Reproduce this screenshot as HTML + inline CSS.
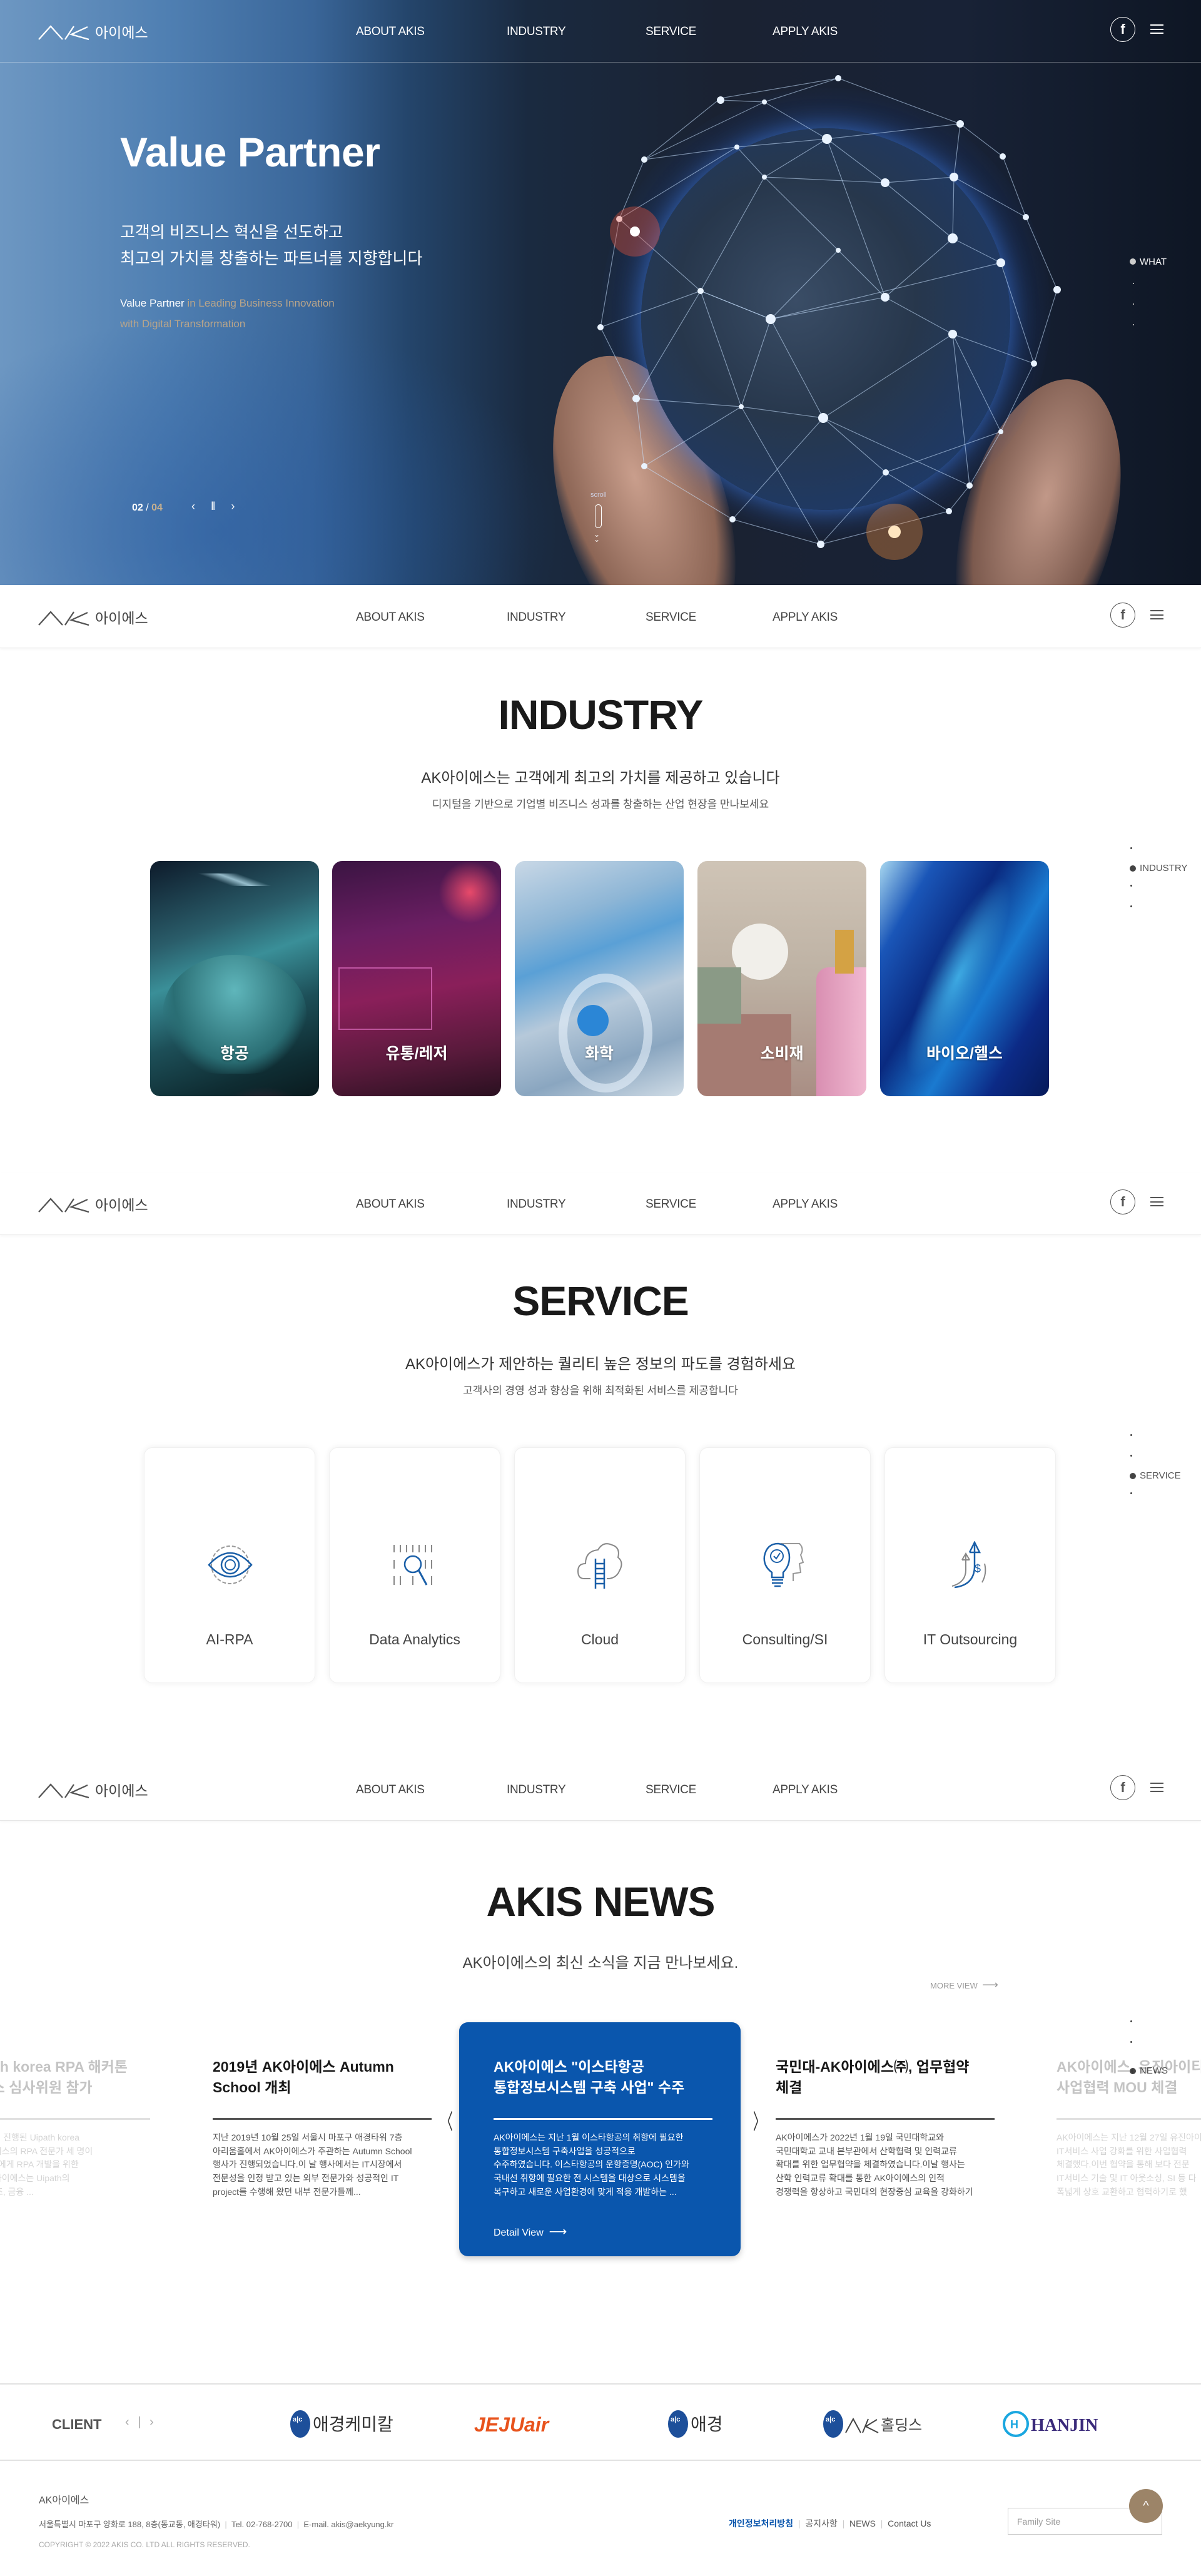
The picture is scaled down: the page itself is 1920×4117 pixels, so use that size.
<!DOCTYPE html>
<html><head><meta charset="utf-8">
<style>
*{margin:0;padding:0;box-sizing:border-box}
body{width:1920px;height:4117px;position:relative;background:#fff;font-family:"Liberation Sans","Noto Sans CJK KR",sans-serif;color:#222;overflow:hidden}
.abs{position:absolute}
.nav{position:absolute;left:0;width:1920px;height:100px}
.nav .logo{position:absolute;left:60px;top:18px}
.nav .m{position:absolute;top:40px;font-size:19px;letter-spacing:-0.3px}
.nav .fb{position:absolute;left:1775px;top:27px;width:40px;height:40px;border-radius:50%;border:1.5px solid;text-align:center;font-weight:bold;font-size:22px;line-height:38px}
.nav .hb{position:absolute;left:1839px;top:39px;width:21px;height:15px;border-top:2px solid;border-bottom:2px solid}
.nav .hb:after{content:"";position:absolute;left:0;right:0;top:4.5px;border-top:2px solid}
.light{background:#fff;border-bottom:1px solid #e6e6e6;box-shadow:0 2px 4px rgba(0,0,0,.04)}
.light,.light .m{color:#444}
.light .fb,.light .hb,.light .hb:after{border-color:#555;color:#555}
.dark{color:#fff;border-bottom:1px solid rgba(255,255,255,.35)}
.dark .fb,.dark .hb,.dark .hb:after{border-color:#fff}
.h2{position:absolute;left:0;width:1920px;text-align:center;font-weight:bold;color:#1a1a1a;letter-spacing:-1px}
.sub{position:absolute;left:0;width:1920px;text-align:center}
.side{position:absolute;left:1806px;font-size:15px;color:#555}
.side i{display:block;width:3px;height:3px;background:#444;border-radius:50%;margin:0 0 30px 1px}
.side b{display:inline-block;width:10px;height:10px;border-radius:50%;background:#444;margin-right:6px;vertical-align:-1px}
.ic{position:absolute;top:1376px;width:270px;height:376px;border-radius:16px;overflow:hidden}
.ic span{position:absolute;top:288px;left:0;width:100%;text-align:center;color:#fff;font-weight:bold;font-size:25px;text-shadow:0 1px 3px rgba(0,0,0,.4)}
.sc{position:absolute;top:2313px;width:274px;height:377px;border-radius:14px;background:#fff;box-shadow:0 0 10px rgba(0,0,0,.07);border:1px solid #f0f0f0}
.sc svg{position:absolute;left:99px;top:149px}
.sc span{position:absolute;top:293px;left:0;width:100%;text-align:center;font-size:23px;color:#444}
.nc{position:absolute;width:350px}
.nc h3{font-size:23px;line-height:33px;font-weight:bold;color:#1a1a1a;height:98px;white-space:nowrap}
.nc hr{border:0;border-top:3px solid #555}
.nc p{font-size:14px;line-height:21.7px;color:#555;margin-top:18px;white-space:nowrap}
</style></head><body>

<!-- HERO -->
<div class="abs" style="left:0;top:0;width:1920px;height:935px;overflow:hidden;background:linear-gradient(90deg,#6d97c2 0%,#4f7fb2 14%,#3a6699 26%,#24456b 34%,#1a2a40 44%,#1a2232 60%,#182236 80%,#0e1624 100%)">
 <div class="abs" style="left:-200px;top:500px;width:1100px;height:700px;background:radial-gradient(ellipse at center,rgba(40,90,160,.55),rgba(40,90,160,0) 70%)"></div>
 <div class="abs" style="left:900px;top:560px;width:260px;height:500px;border-radius:50%;background:radial-gradient(ellipse at 50% 40%,#c99e8c,#8d6656 60%,rgba(80,60,60,0) 75%);transform:rotate(-18deg)"></div>
 <div class="abs" style="left:1540px;top:600px;width:240px;height:480px;border-radius:50%;background:radial-gradient(ellipse at 50% 40%,#c19888,#7c5a4e 60%,rgba(80,60,60,0) 75%);transform:rotate(15deg)"></div>
 <div class="abs" style="left:960px;top:140px;width:720px;height:720px;border-radius:50%;background:radial-gradient(circle at 50% 50%,rgba(50,120,230,.45),rgba(30,80,180,.25) 55%,rgba(20,60,150,0) 72%)"></div>
 <div class="abs" style="left:1025px;top:205px;width:590px;height:610px;border-radius:50%;background:radial-gradient(circle at 42% 45%,#3a4d66 0%,#27374c 40%,#1d3a6a 80%,#3f7fd8 98%);box-shadow:0 0 40px rgba(70,140,255,.6)"></div>
 <svg class="abs" style="left:0;top:0" width="1920" height="935">
  <g stroke="rgba(200,225,255,.55)" stroke-width="1.2" fill="none">
   <polyline points="1340,125 1152,157 1152,160 1222,163 1340,125 1535,198 1603,250 1640,347 1690,463 1653,581 1600,690 1550,776 1517,817 1312,870 1171,830 1030,745 1017,637 960,523 990,350 1030,255 1152,157"/>
   <polyline points="1030,255 1222,163 1322,222 1535,198 1525,283 1415,292 1322,222 1178,235 1030,255"/>
   <polyline points="1178,235 1222,283 1415,292 1523,381 1600,420 1653,581 1523,534 1415,475 1232,510 1120,465 990,350 1178,235"/>
   <polyline points="960,523 1120,465 1222,283 1322,222 1415,475 1523,381 1525,283 1640,347"/>
   <polyline points="1017,637 1120,465 1232,510 1316,668 1523,534 1600,690 1416,755 1316,668 1185,650 1017,637"/>
   <polyline points="1030,745 1185,650 1312,870 1416,755 1517,817"/>
   <polyline points="1171,830 1316,668 1550,776 1523,534"/>
   <polyline points="1232,510 1340,400 1415,475 1340,400 1222,283"/>
   <polyline points="1120,465 1185,650 1232,510 1600,420"/>
  </g>
  <g fill="#e9f3ff">
   <circle cx="1340" cy="125" r="5"/><circle cx="1152" cy="160" r="6"/><circle cx="1222" cy="163" r="4"/><circle cx="1535" cy="198" r="6"/><circle cx="1603" cy="250" r="5"/><circle cx="1640" cy="347" r="5"/><circle cx="1690" cy="463" r="6"/><circle cx="1653" cy="581" r="5"/><circle cx="1600" cy="690" r="4"/><circle cx="1550" cy="776" r="5"/><circle cx="1517" cy="817" r="5"/><circle cx="1312" cy="870" r="6"/><circle cx="1171" cy="830" r="5"/><circle cx="1030" cy="745" r="5"/><circle cx="1017" cy="637" r="6"/><circle cx="960" cy="523" r="5"/><circle cx="990" cy="350" r="5"/><circle cx="1030" cy="255" r="5"/><circle cx="1322" cy="222" r="8"/><circle cx="1415" cy="292" r="7"/><circle cx="1525" cy="283" r="7"/><circle cx="1178" cy="235" r="4"/><circle cx="1523" cy="381" r="8"/><circle cx="1415" cy="475" r="7"/><circle cx="1232" cy="510" r="8"/><circle cx="1120" cy="465" r="5"/><circle cx="1523" cy="534" r="7"/><circle cx="1316" cy="668" r="8"/><circle cx="1416" cy="755" r="5"/><circle cx="1185" cy="650" r="4"/><circle cx="1340" cy="400" r="4"/><circle cx="1600" cy="420" r="7"/><circle cx="1222" cy="283" r="4"/>
  </g>
  <circle cx="1015" cy="370" r="40" fill="rgba(255,90,60,.35)"/><circle cx="1015" cy="370" r="8" fill="#fff"/>
  <circle cx="1430" cy="850" r="45" fill="rgba(255,150,60,.35)"/><circle cx="1430" cy="850" r="10" fill="#ffe6c0"/>
 </svg>
 <div class="abs" style="left:192px;top:205px;font-size:66px;font-weight:bold;color:#fff;letter-spacing:-0.5px">Value Partner</div>
 <div class="abs" style="left:192px;top:350px;font-size:26px;line-height:42px;color:#fff">고객의 비즈니스 혁신을 선도하고<br>최고의 가치를 창출하는 파트너를 지향합니다</div>
 <div class="abs" style="left:192px;top:468px;font-size:17px;line-height:33px;color:#fff">Value Partner <span style="color:#b9a58a">in Leading Business Innovation<br>with Digital Transformation</span></div>
 <div class="abs" style="left:211px;top:803px;font-size:16px;color:#fff;font-weight:bold">02 <span style="font-weight:normal">/</span> <span style="color:#c7b08f">04</span></div>
 <div class="abs" style="left:306px;top:799px;font-size:18px;color:#fff;letter-spacing:10px">‹ ‖ ›</div>
 <div class="abs" style="left:944px;top:785px;font-size:11px;color:#ccd">scroll</div>
 <div class="abs" style="left:951px;top:806px;width:11px;height:38px;border:1.5px solid #fff;border-radius:6px"></div>
 <div class="abs" style="left:949px;top:850px;font-size:12px;color:#fff;line-height:8px">⌄<br>⌄</div>
 <div class="abs" style="left:1806px;top:410px;font-size:15px;color:#fff"><b style="display:inline-block;width:10px;height:10px;border-radius:50%;background:#ccc;margin-right:6px"></b>WHAT</div>
 <div class="abs" style="left:1811px;top:452px;width:2px;height:2px;background:#aaa"></div>
 <div class="abs" style="left:1811px;top:485px;width:2px;height:2px;background:#aaa"></div>
 <div class="abs" style="left:1811px;top:518px;width:2px;height:2px;background:#aaa"></div>
</div>

<div class="nav dark" style="top:0">
 <svg class="logo" width="190" height="50"><path d="M2,45 L21,24 L40,45 M44,45 L58,24 M80,25 L54,37 L82,45" stroke="#fff" stroke-width="2.3" fill="none"/><text x="92" y="42" font-size="23" fill="#fff" font-family="Liberation Sans,Noto Sans CJK KR,sans-serif">아이에스</text></svg>
 <div class="m" style="left:569px">ABOUT AKIS</div><div class="m" style="left:810px">INDUSTRY</div><div class="m" style="left:1032px">SERVICE</div><div class="m" style="left:1235px">APPLY AKIS</div>
 <div class="fb">f</div><div class="hb"></div>
</div>
<div class="nav light" style="top:936px">
 <svg class="logo" width="190" height="50"><path d="M2,45 L21,24 L40,45 M44,45 L58,24 M80,25 L54,37 L82,45" stroke="#555" stroke-width="2.3" fill="none"/><text x="92" y="42" font-size="23" fill="#444" font-family="Liberation Sans,Noto Sans CJK KR,sans-serif">아이에스</text></svg>
 <div class="m" style="left:569px">ABOUT AKIS</div><div class="m" style="left:810px">INDUSTRY</div><div class="m" style="left:1032px">SERVICE</div><div class="m" style="left:1235px">APPLY AKIS</div>
 <div class="fb">f</div><div class="hb"></div>
</div>
<div class="nav light" style="top:1874px">
 <svg class="logo" width="190" height="50"><path d="M2,45 L21,24 L40,45 M44,45 L58,24 M80,25 L54,37 L82,45" stroke="#555" stroke-width="2.3" fill="none"/><text x="92" y="42" font-size="23" fill="#444" font-family="Liberation Sans,Noto Sans CJK KR,sans-serif">아이에스</text></svg>
 <div class="m" style="left:569px">ABOUT AKIS</div><div class="m" style="left:810px">INDUSTRY</div><div class="m" style="left:1032px">SERVICE</div><div class="m" style="left:1235px">APPLY AKIS</div>
 <div class="fb">f</div><div class="hb"></div>
</div>
<div class="nav light" style="top:2810px">
 <svg class="logo" width="190" height="50"><path d="M2,45 L21,24 L40,45 M44,45 L58,24 M80,25 L54,37 L82,45" stroke="#555" stroke-width="2.3" fill="none"/><text x="92" y="42" font-size="23" fill="#444" font-family="Liberation Sans,Noto Sans CJK KR,sans-serif">아이에스</text></svg>
 <div class="m" style="left:569px">ABOUT AKIS</div><div class="m" style="left:810px">INDUSTRY</div><div class="m" style="left:1032px">SERVICE</div><div class="m" style="left:1235px">APPLY AKIS</div>
 <div class="fb">f</div><div class="hb"></div>
</div>

<!-- INDUSTRY -->
<div class="h2" style="top:1104px;font-size:66px">INDUSTRY</div>
<div class="sub" style="top:1223px;font-size:24px;color:#333">AK아이에스는 고객에게 최고의 가치를 제공하고 있습니다</div>
<div class="sub" style="top:1271px;font-size:17px;color:#555">디지털을 기반으로 기업별 비즈니스 성과를 창출하는 산업 현장을 만나보세요</div>
<div class="side" style="top:1354px"><i></i><div style="margin:-8px 0 18px"><b></b>INDUSTRY</div><i></i><i></i></div>

<div class="ic" style="left:240px;background:linear-gradient(160deg,#0d1a2a 0%,#2a5d6a 30%,#3a8f98 45%,#1d4f58 65%,#0f2d33 85%,#0a1a1e 100%)"><div class="abs" style="left:0;top:20px;width:270px;height:20px;background:linear-gradient(20deg,transparent 40%,rgba(200,240,255,.7) 50%,transparent 60%)"></div><div class="abs" style="left:20px;top:150px;width:230px;height:190px;border-radius:50% 50% 40% 40%;background:radial-gradient(ellipse at 50% 30%,#5fb6bb,#2a6e74 60%,rgba(0,0,0,0) 75%)"></div><div class="abs" style="left:100px;top:360px;width:160px;height:120px;border-radius:50%;background:radial-gradient(#e0306a55,transparent 70%)"></div><span>항공</span></div>
<div class="ic" style="left:531px;background:linear-gradient(170deg,#3a1442 0%,#6a1e62 30%,#8a1f5a 55%,#5a1a3c 80%,#2a1020 100%)"><div class="abs" style="left:170px;top:0;width:100px;height:100px;border-radius:50%;background:radial-gradient(#e84a6a,transparent 70%)"></div><div class="abs" style="left:10px;top:170px;width:150px;height:100px;border:2px solid #f07bd2;opacity:.6"></div><span>유통/레저</span></div>
<div class="ic" style="left:823px;background:linear-gradient(160deg,#c9d8e6 0%,#8eb6d6 25%,#5aa0d6 40%,#b6c9da 60%,#8aa6c0 80%,#d0dce6 100%)"><div class="abs" style="left:70px;top:180px;width:150px;height:190px;border-radius:50%;border:14px solid rgba(230,240,250,.6)"></div><div class="abs" style="left:100px;top:230px;width:50px;height:50px;border-radius:50%;background:#2b86d6"></div><span>화학</span></div>
<div class="ic" style="left:1115px;background:linear-gradient(180deg,#cfc4b6 0%,#bdb1a3 50%,#a98e84 100%)"><div class="abs" style="left:55px;top:100px;width:90px;height:90px;border-radius:50%;background:#f1efea"></div><div class="abs" style="left:0;top:245px;width:150px;height:140px;background:#a57b72"></div><div class="abs" style="left:0;top:170px;width:70px;height:90px;background:#8a9a86"></div><div class="abs" style="left:190px;top:170px;width:80px;height:214px;border-radius:20px 0 0 0;background:linear-gradient(90deg,#d98fb2,#f0b8d0)"></div><div class="abs" style="left:220px;top:110px;width:30px;height:70px;background:#d4a244"></div><span>소비재</span></div>
<div class="ic" style="left:1407px;background:linear-gradient(120deg,#a8d8f0 0%,#1a56b8 18%,#0a2a80 40%,#1a7ad0 60%,#0c2a86 80%,#061a5a 100%)"><div class="abs" style="left:80px;top:10px;width:90px;height:350px;transform:rotate(25deg);background:radial-gradient(ellipse,rgba(80,210,255,.7),transparent 70%)"></div><span>바이오/헬스</span></div>

<!-- SERVICE -->
<div class="h2" style="top:2041px;font-size:66px">SERVICE</div>
<div class="sub" style="top:2160px;font-size:24px;color:#333">AK아이에스가 제안하는 퀄리티 높은 정보의 파도를 경험하세요</div>
<div class="sub" style="top:2208px;font-size:17px;color:#555">고객사의 경영 성과 향상을 위해 최적화된 서비스를 제공합니다</div>
<div class="side" style="top:2292px"><i></i><i></i><div style="margin:-8px 0 18px"><b></b>SERVICE</div><i></i></div>

<div class="sc" style="left:230px"><svg width="76" height="76" viewBox="0 0 76 76" fill="none"><circle cx="38" cy="38" r="30" stroke="#999" stroke-width="2" stroke-dasharray="6 3"/><path d="M4,38 Q38,0 72,38 Q38,76 4,38Z" stroke="#1a5fa8" stroke-width="2.5"/><circle cx="38" cy="38" r="14" stroke="#1a5fa8" stroke-width="2.5"/><circle cx="38" cy="38" r="8" stroke="#1a5fa8" stroke-width="2"/></svg><span>AI-RPA</span></div>
<div class="sc" style="left:526px"><svg width="76" height="76" viewBox="0 0 76 76" fill="none" stroke="#888" stroke-width="2"><path d="M4,6v12M14,6v12M24,6v12M34,6v12M44,6v12M54,6v12M64,6v12M4,30v14M64,30v14M54,30v14M4,56v14M14,56v14M34,56v14M64,56v14"/><circle cx="34" cy="37" r="13" stroke="#1a5fa8" stroke-width="2.5"/><path d="M43,46 L56,70" stroke="#1a5fa8" stroke-width="3"/></svg><span>Data Analytics</span></div>
<div class="sc" style="left:822px"><svg width="76" height="76" viewBox="0 0 76 76" fill="none"><path d="M22,60 H12 Q2,60 2,48 Q2,36 14,36 Q14,16 34,14 Q42,0 56,6 Q70,10 66,26 Q76,34 68,48 Q64,58 52,60 H48" stroke="#888" stroke-width="2"/><path d="M30,28V76M44,28V76M30,36H44M30,44H44M30,52H44M30,60H44M30,68H44" stroke="#1a5fa8" stroke-width="2.5"/></svg><span>Cloud</span></div>
<div class="sc" style="left:1118px"><svg width="76" height="76" viewBox="0 0 76 76" fill="none"><path d="M30,4 H60 Q68,12 62,22 L66,34 L60,36 L62,50 L50,52 L50,64" stroke="#999" stroke-width="2"/><path d="M16,58 V50 Q2,40 4,24 Q8,4 26,4 Q44,6 44,26 Q44,40 34,50 V58 Z M16,62H34M16,67H34M20,72H30" stroke="#1a5fa8" stroke-width="2.5"/><circle cx="24" cy="24" r="10" stroke="#1a5fa8" stroke-width="2"/><path d="M19,24 L23,28 L29,19" stroke="#1a5fa8" stroke-width="2"/></svg><span>Consulting/SI</span></div>
<div class="sc" style="left:1414px"><svg width="76" height="76" viewBox="0 0 76 76" fill="none"><path d="M8,72 Q30,66 30,46 V20 M24,30 L30,20 L36,30 M24,30 H36" stroke="#888" stroke-width="2"/><path d="M12,74 Q44,70 44,40 V4 M36,18 L44,2 L52,18 H36" stroke="#1a5fa8" stroke-width="2.5"/><text x="44" y="50" font-size="18" fill="#1a5fa8" font-family="Liberation Sans">$</text><path d="M60,36 Q64,52 56,66" stroke="#888" stroke-width="2"/></svg><span>IT Outsourcing</span></div>

<!-- NEWS -->
<div class="h2" style="top:3001px;font-size:66px">AKIS NEWS</div>
<div class="sub" style="top:3117px;font-size:24px;color:#444">AK아이에스의 최신 소식을 지금 만나보세요.</div>
<div class="abs" style="left:1487px;top:3162px;font-size:13px;color:#999">MORE VIEW &nbsp;<span style="font-size:18px">⟶</span></div>
<div class="side" style="top:3229px"><i></i><i style="margin-bottom:50px"></i><div style="margin:-14px 0 0 0"><b></b>NEWS</div></div>

<div class="nc" style="left:-110px;top:3287px;opacity:.25"><h3>RPA Uipath korea RPA 해커톤<br>AK아이에스 심사위원 참가</h3><hr style="border-color:#888;margin-right:-0px;width:350px"><p>11월부터 10일까지 진행된 Uipath korea<br>해커톤에 AK아이에스의 RPA 전문가 세 명이<br>참여하고 참가자들에게 RPA 개발을 위한<br>전달했습니다.AK아이에스는 Uipath의<br>파트너로 유통, 제조, 금융 ...</p></div>
<div class="nc" style="left:340px;top:3287px"><h3>2019년 AK아이에스 Autumn<br>School 개최</h3><hr><p>지난 2019년 10월 25일 서울시 마포구 애경타워 7층<br>아리움홀에서 AK아이에스가 주관하는 Autumn School<br>행사가 진행되었습니다.이 날 행사에서는 IT시장에서<br>전문성을 인정 받고 있는 외부 전문가와 성공적인 IT<br>project를 수행해 왔던 내부 전문가들께...</p></div>
<div class="abs" style="left:734px;top:3232px;width:450px;height:374px;background:#0a56ad;border-radius:14px;box-shadow:0 4px 10px rgba(0,0,0,.2)"></div>
<div class="nc" style="left:789px;top:3287px;color:#fff"><h3 style="color:#fff">AK아이에스 "이스타항공<br>통합정보시스템 구축 사업" 수주</h3><hr style="border-color:#fff"><p style="color:#fff">AK아이에스는 지난 1월 이스타항공의 취항에 필요한<br>통합정보시스템 구축사업을 성공적으로<br>수주하였습니다. 이스타항공의 운항증명(AOC) 인가와<br>국내선 취항에 필요한 전 시스템을 대상으로 시스템을<br>복구하고 새로운 사업환경에 맞게 적응 개발하는 ...</p></div>
<div class="abs" style="left:789px;top:3554px;font-size:16px;color:#fff">Detail View &nbsp;<span style="font-size:20px">⟶</span></div>
<div class="abs" style="left:697px;top:3364px;font-size:34px;color:#333;transform:scaleX(.6)">〈</div>
<div class="abs" style="left:1197px;top:3364px;font-size:34px;color:#333;transform:scaleX(.6)">〉</div>
<div class="nc" style="left:1240px;top:3287px"><h3>국민대-AK아이에스㈜, 업무협약<br>체결</h3><hr><p>AK아이에스가 2022년 1월 19일 국민대학교와<br>국민대학교 교내 본부관에서 산학협력 및 인력교류<br>확대를 위한 업무협약을 체결하였습니다.이날 행사는<br>산학 인력교류 확대를 통한 AK아이에스의 인적<br>경쟁력을 향상하고 국민대의 현장중심 교육을 강화하기</p></div>
<div class="nc" style="left:1689px;top:3287px;opacity:.25"><h3>AK아이에스, 유진아이티서비스<br>사업협력 MOU 체결</h3><hr style="border-color:#888"><p>AK아이에스는 지난 12월 27일 유진아이티<br>IT서비스 사업 강화를 위한 사업협력<br>체결했다.이번 협약을 통해 보다 전문<br>IT서비스 기술 및 IT 아웃소싱, SI 등 다<br>폭넓게 상호 교환하고 협력하기로 했</p></div>

<!-- CLIENT -->
<div class="abs" style="left:0;top:3809px;width:1920px;height:124px;border-top:2px solid #e2e2e2;border-bottom:2px solid #e2e2e2"></div>
<div class="abs" style="left:83px;top:3862px;font-size:22px;color:#555;font-weight:bold">CLIENT</div>
<div class="abs" style="left:200px;top:3860px;font-size:20px;color:#aaa;letter-spacing:4px">‹ | ›</div>
<svg class="abs" style="left:460px;top:3850px" width="1330" height="50" font-family="Liberation Sans,Noto Sans CJK KR,sans-serif">
 <g><ellipse cx="20" cy="24" rx="16" ry="22" fill="#1d4f9a"/><text x="8" y="20" font-size="11" fill="#fff" font-weight="bold">a|c</text><text x="40" y="34" font-size="28" fill="#333">애경케미칼</text></g>
 <text x="298" y="36" font-size="32" fill="#e8531c" font-weight="bold" font-style="italic">JEJUair</text>
 <g><ellipse cx="624" cy="24" rx="16" ry="22" fill="#1d4f9a"/><text x="612" y="20" font-size="11" fill="#fff" font-weight="bold">a|c</text><text x="644" y="34" font-size="28" fill="#333">애경</text></g>
 <g><ellipse cx="872" cy="24" rx="16" ry="22" fill="#1d4f9a"/><text x="860" y="20" font-size="11" fill="#fff" font-weight="bold">a|c</text><path d="M892,38 L904,16 L916,38 M919,38 L928,16 M942,17 L924,28 L944,38" stroke="#444" stroke-width="2" fill="none"/><text x="948" y="34" font-size="24" fill="#444">홀딩스</text></g>
 <g><circle cx="1164" cy="24" r="19" fill="none" stroke="#1aa7e0" stroke-width="4"/><text x="1155" y="31" font-size="18" fill="#1aa7e0" font-weight="bold">H</text><text x="1188" y="35" font-size="28" fill="#3a2a7a" font-weight="bold" font-family="Liberation Serif,serif">HANJIN</text></g>
</svg>

<!-- FOOTER -->
<div class="abs" style="left:62px;top:3982px;font-size:16px;color:#555">AK아이에스</div>
<div class="abs" style="left:62px;top:4024px;font-size:13px;color:#666">서울특별시 마포구 양화로 188, 8층(동교동, 애경타워) &nbsp;<span style="color:#ccc">|</span>&nbsp; Tel. 02-768-2700 &nbsp;<span style="color:#ccc">|</span>&nbsp; E-mail. akis@aekyung.kr</div>
<div class="abs" style="left:62px;top:4060px;font-size:12px;color:#aaa">COPYRIGHT © 2022 AKIS CO. LTD ALL RIGHTS RESERVED.</div>
<div class="abs" style="left:1165px;top:4023px;font-size:14px;color:#555"><span style="color:#0a56ad;font-weight:bold">개인정보처리방침</span> &nbsp;<span style="color:#ccc">|</span>&nbsp; 공지사항 &nbsp;<span style="color:#ccc">|</span>&nbsp; NEWS &nbsp;<span style="color:#ccc">|</span>&nbsp; Contact Us</div>
<div class="abs" style="left:1611px;top:4008px;width:247px;height:43px;border:1px solid #ccc;font-size:14px;color:#999;padding:13px 0 0 14px">Family Site</div>
<div class="abs" style="left:1805px;top:3978px;width:54px;height:54px;border-radius:50%;background:#9c8468;color:#fff;text-align:center;font-size:20px;line-height:54px">^</div>
</body></html>
